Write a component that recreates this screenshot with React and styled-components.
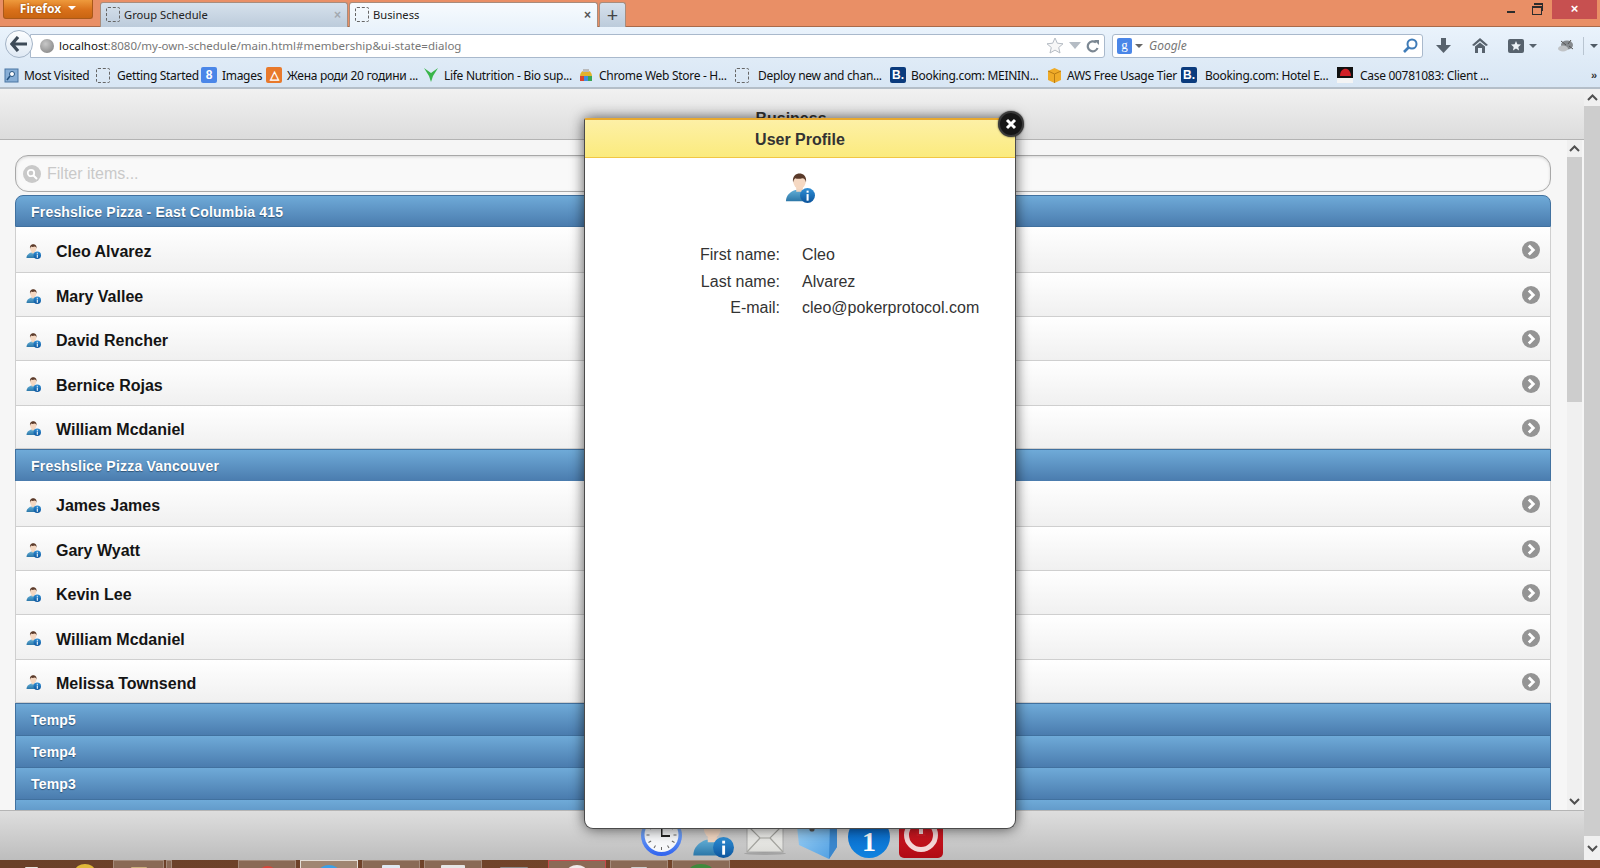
import React from "react"
import styled, { createGlobalStyle } from "styled-components"

const GlobalStyle = createGlobalStyle`
  html, body { margin: 0; padding: 0; height: 100%; overflow: hidden; }
  body { font-family: "Liberation Sans", Arial, sans-serif; }
`

const chromeFont = `"Noto Sans", "Liberation Sans", sans-serif`

const Screen = styled.div`
  position: relative;
  width: 1600px;
  height: 868px;
  overflow: hidden;
  display: flex;
  flex-direction: column;
  background: #f5f5f5;
`

/* ---------- browser chrome ---------- */
const TitleBar = styled.div`
  height: 27px;
  box-sizing: border-box;
  background: #e98f66;
  border-bottom: 1px solid #a86a4b;
  display: flex;
  align-items: flex-start;
  padding-left: 3px;
  flex: none;
`
const FirefoxButton = styled.div`
  width: 90px;
  height: 19px;
  box-sizing: border-box;
  background: linear-gradient(#ee9a3c, #d9701a 55%, #c96512);
  border: 1px solid #a9591a;
  border-top: none;
  border-radius: 0 0 3px 3px;
  color: #fff;
  font: bold 12px ${chromeFont};
  display: flex;
  align-items: center;
  justify-content: center;
  gap: 7px;
  padding-bottom: 2px;
  margin-right: 7px;
  text-shadow: 0 0 2px #7a3c05;
  &::after {
    content: "";
    border: 4px solid transparent;
    border-top: 4px solid #fff;
    border-bottom: none;
  }
`
const Tab = styled.div`
  width: ${p => p.$w}px;
  height: 25px;
  margin-top: 2px;
  box-sizing: border-box;
  margin-right: 1px;
  border: 1px solid #a88c7c;
  border-bottom: none;
  border-radius: 3px 3px 0 0;
  background: ${p => p.$active ? "linear-gradient(#f7fbfe, #eaf3fb)" : "linear-gradient(#d6e1ec, #bccbdb)"};
  display: flex;
  align-items: center;
  padding: 0 6px 1px 5px;
  font: 11.2px ${chromeFont};
  color: #222;
  span { flex: 1; margin-left: 4px; }
  b { font: bold 12px "Liberation Sans", sans-serif; color: ${p => p.$active ? "#555" : "#a3a9b0"}; }
`
const NewTab = styled(Tab)`
  justify-content: center;
  background: linear-gradient(#d6e1ec, #bccbdb);
  font-size: 20px;
  font-weight: 400;
  color: #444;
  padding: 0 0 2px;
`
const BlankPage = styled.i`
  display: block;
  flex: none;
  width: 14px;
  height: 15px;
  box-sizing: border-box;
  border: 1px dashed #666;
  border-radius: 2px;
`
const WindowControls = styled.div`
  margin-left: auto;
  display: flex;
  align-items: flex-start;
  height: 19px;
  padding-right: 3px;
`
const WinMin = styled.div`
  width: 8px;
  height: 2px;
  background: #2c2c2c;
  margin: 11px 17px 0 0;
`
const WinMax = styled.div`
  position: relative;
  width: 8px;
  height: 6px;
  border: 1px solid #2c2c2c;
  border-top-width: 2px;
  margin: 6px 10px 0 0;
  &::before {
    content: "";
    position: absolute;
    left: 1px;
    top: -5px;
    width: 8px;
    height: 6px;
    border: 1px solid #2c2c2c;
    border-top-width: 2px;
    border-left: none;
    border-bottom: none;
  }
`
const WinClose = styled.div`
  width: 45px;
  height: 19px;
  background: #c75050;
  color: #fff;
  font: bold 13px/18px "Liberation Sans", sans-serif;
  text-align: center;
`

const NavBar = styled.div`
  height: 33px;
  flex: none;
  background: linear-gradient(#eaf3fc, #dfebf7);
  display: flex;
  align-items: center;
  padding: 4px 0 0 5px;
  box-sizing: border-box;
  position: relative;
`
const BackButton = styled.div`
  width: 28px;
  height: 28px;
  flex: none;
  box-sizing: border-box;
  border: 1px solid #a3b3c6;
  border-radius: 50%;
  background: linear-gradient(#fdfeff, #dfe9f4);
  display: flex;
  align-items: center;
  justify-content: center;
  margin: -3px -3px 0 0;
  z-index: 1;
`
const UrlBox = styled.div`
  width: 1075px;
  height: 24px;
  box-sizing: border-box;
  border: 1px solid #a9b9cc;
  border-radius: 0 3px 3px 0;
  background: #fff;
  display: flex;
  align-items: center;
  padding: 0 3px 0 9px;
  font: 11.5px ${chromeFont};
  color: #777;
  em { font-style: normal; color: #111; }
  span { flex: 1; margin-left: 5px; }
`
const Globe = styled.i`
  width: 14px;
  height: 14px;
  border-radius: 50%;
  background: radial-gradient(circle at 40% 35%, #c8c8c8, #7b7b7b);
`
const SearchBox = styled.div`
  width: 311px;
  height: 24px;
  margin-left: 7px;
  box-sizing: border-box;
  border: 1px solid #a9b9cc;
  border-radius: 3px;
  background: #fff;
  display: flex;
  align-items: center;
  padding: 0 4px 0 4px;
  font: italic 12px ${chromeFont};
  color: #777;
  span { flex: 1; margin-left: 6px; }
`
const SmallArrow = styled.i`
  display: block;
  margin-left: ${p => p.$ml || 3}px;
  border-style: solid;
  border-color: ${p => p.$color || "#666"} transparent transparent;
  border-width: ${p => p.$big ? "7px 6px 0" : "4px 4px 0"};
`
const GoogleTile = styled.div`
  width: 15px;
  height: 16px;
  border-radius: 2px;
  background: #4a86e8;
  color: #fff;
  font: 13px/14px "Liberation Serif", serif;
  text-align: center;
  flex: none;
`
const NavTools = styled.div`
  display: flex;
  align-items: center;
  margin-left: 13px;
`
const NavTool = styled.div`
  margin-right: ${p => p.$mr}px;
  display: flex;
  align-items: center;
`

const BookmarkBar = styled.div`
  height: 29px;
  flex: none;
  box-sizing: border-box;
  background: linear-gradient(#dfebf7, #d8e6f4);
  border-bottom: 2px solid #b4bec8;
  display: flex;
  align-items: center;
  padding: 3px 0 0 4px;
  font: 12px ${chromeFont};
  color: #111;
`
const Bookmark = styled.div`
  display: flex;
  align-items: center;
  flex: none;
  width: ${p => p.$w}px;
  white-space: nowrap;
  overflow: visible;
  gap: ${p => p.$gap || 5}px;
  span { letter-spacing: -0.3px; }
`
const FavTile = styled.i`
  flex: none;
  width: 16px;
  height: 16px;
  border-radius: 2px;
  background: ${p => p.$bg};
  color: #fff;
  font: bold 12px/16px "Liberation Sans", sans-serif;
  text-align: center;
`
const More = styled.div`
  margin-left: auto;
  padding-right: 3px;
  font: bold 11px "Liberation Sans", sans-serif;
  color: #333;
`

/* ---------- page ---------- */
const Main = styled.div`
  flex: 1;
  min-height: 0;
  display: flex;
`
const Page = styled.div`
  flex: 1;
  display: flex;
  flex-direction: column;
  min-width: 0;
`
const PageHeader = styled.div`
  height: 51px;
  flex: none;
  box-sizing: border-box;
  border-bottom: 1px solid #b3b3b3;
  background: linear-gradient(#f1f1f1, #dcdcdc);
  text-align: center;
  font: bold 16px/60px "Liberation Sans", sans-serif;
  color: #333;
  padding-right: 2px;
`
const Content = styled.div`
  flex: 1;
  min-height: 0;
  display: flex;
  background: #f6f6f6;
`
const ListColumn = styled.div`
  flex: 1;
  padding: 15px 16px 0 15px;
  overflow: hidden;
  min-width: 0;
`
const FilterBox = styled.div`
  height: 37px;
  box-sizing: border-box;
  border: 1px solid #a8a8a8;
  border-radius: 13px;
  background: #f9f9f9;
  box-shadow: inset 0 1px 3px rgba(0,0,0,.15);
  display: flex;
  align-items: center;
  padding-left: 7px;
  gap: 6px;
  font: 16px "Liberation Sans", sans-serif;
  color: #c9c9c9;
  margin-bottom: 3px;
`
const FilterIcon = styled.div`
  width: 18px;
  height: 18px;
  border-radius: 50%;
  background: #c9c9c9;
  display: flex;
  align-items: center;
  justify-content: center;
`
const GroupHeader = styled.div`
  height: ${p => p.$h || 32}px;
  box-sizing: border-box;
  border: 1px solid #41719f;
  border-width: ${p => p.$first ? "1px 1px 1px 1px" : "1px 1px 0 1px"};
  border-radius: ${p => p.$first ? "8px 8px 0 0" : "0"};
  background: linear-gradient(#6faad8, #4a7cae);
  color: #fff;
  font: bold 14px/${p => p.$h || 32}px "Liberation Sans", sans-serif;
  letter-spacing: 0.2px;
  padding-left: 15px;
  text-shadow: 0 1px 1px #2f5578;
`
const Row = styled.div`
  height: ${p => p.$h}px;
  box-sizing: border-box;
  border: 1px solid #cfcfcf;
  border-width: 0 1px 1px 1px;
  background: linear-gradient(#ffffff, #f0f0f0);
  display: flex;
  align-items: center;
  padding: 5px 10px 0 10px;
  font: bold 16px "Liberation Sans", sans-serif;
  color: #141414;
  > svg { margin-top: -2px; }
`
const RowName = styled.div`
  flex: 1;
  margin-left: 15px;
`
const RowArrow = styled.div`
  margin-top: -4px;
`
const CloseDot = styled.div`
  position: absolute;
  top: -9px;
  right: -9px;
  width: 26px;
  height: 26px;
  box-sizing: border-box;
  border-radius: 50%;
  border: 2px solid #3a3a3a;
  background: #161616;
  box-shadow: 0 0 2px rgba(0,0,0,.7);
  display: flex;
  align-items: center;
  justify-content: center;
`
const ScrollTrack = styled.div`
  width: ${p => p.$w}px;
  flex: none;
  display: flex;
  flex-direction: column;
  background: ${p => p.$bg};
  margin-right: ${p => p.$mr || 0}px;
`
const ScrollButton = styled.div`
  height: ${p => p.$h}px;
  flex: none;
  display: flex;
  align-items: center;
  justify-content: center;
  background: #f0f0f0;
`
const ScrollThumb = styled.div`
  background: #cdcdcd;
  ${p => p.$h ? `height: ${p.$h}px; flex: none;` : "flex: 1;"}
`
const ScrollGap = styled.div`
  flex: 1;
`

const Footer = styled.div`
  height: 50px;
  flex: none;
  box-sizing: border-box;
  border-top: 1px solid #b5b5b5;
  background: linear-gradient(#dedede, #bdbdbd);
  overflow: hidden;
  display: flex;
  justify-content: center;
  align-items: flex-end;
  padding-bottom: 1px;
`
const DockIcon = styled.div`
  width: ${p => p.$w}px;
  margin-right: ${p => p.$mr}px;
  margin-bottom: ${p => p.$mb || 0}px;
  flex: none;
  line-height: 0;
`

const Taskbar = styled.div`
  height: 8px;
  flex: none;
  background: linear-gradient(90deg, #6a4029, #74452a 50%, #83462a);
  display: flex;
  align-items: flex-start;
`
const TaskItem = styled.div`
  width: ${p => p.$w}px;
  margin-left: ${p => p.$ml}px;
  height: 8px;
  box-sizing: border-box;
  border: 1px solid ${p => p.$edge || "#a58b7b"};
  border-bottom: none;
  background: ${p => p.$bg || "#8a6a56"};
  display: flex;
  justify-content: center;
  overflow: hidden;
  flex: none;
`
const TaskGlyph = styled.i`
  display: block;
  flex: none;
  width: ${p => p.$w}px;
  height: 14px;
  margin-left: ${p => p.$ml || 0}px;
  margin-top: ${p => p.$top}px;
  background: ${p => p.$color};
  border-radius: ${p => p.$round ? "50%" : "1px"};
`
const TaskEdge = styled.div`
  display: flex;
  height: 8px;
  overflow: hidden;
  flex: none;
`

/* ---------- dialog ---------- */
const Dialog = styled.div`
  position: absolute;
  left: 584px;
  top: 118px;
  width: 432px;
  height: 711px;
  box-sizing: border-box;
  background: #fff;
  border: 1px solid #4a4a4a;
  border-top: 2px solid #e8a92e;
  border-radius: 2px 2px 9px 9px;
  box-shadow: 0 0 14px rgba(0,0,0,.65);
  z-index: 5;
`
const DialogTitle = styled.div`
  height: 38px;
  box-sizing: border-box;
  background: linear-gradient(#fdf0a6, #fbeb7e);
  border-bottom: 1px solid #f1c644;
  font: bold 16px/40px "Liberation Sans", sans-serif;
  color: #333;
  text-align: center;
`
const DialogBody = styled.div`
  display: flex;
  flex-direction: column;
  align-items: center;
  padding-top: 15px;
`
const Fields = styled.div`
  margin-top: 39px;
  width: 100%;
  display: grid;
  grid-template-columns: 195px 1fr;
  column-gap: 22px;
  font: 16px/26.5px "Liberation Sans", sans-serif;
  color: #333;
`
const FieldLabel = styled.div`
  text-align: right;
`

const UserInfoIcon = ({ size = 16 }) => (
  <svg width={size} height={size} viewBox="0 0 32 32" style={{ display: "block", flex: "none" }}>
    <defs>
      <linearGradient id="uiBody" x1="0" y1="0" x2="0" y2="1">
        <stop offset="0" stopColor="#62aed6" />
        <stop offset="1" stopColor="#2c77a8" />
      </linearGradient>
      <linearGradient id="uiBadge" x1="0" y1="0" x2="0" y2="1">
        <stop offset="0" stopColor="#2f8fd6" />
        <stop offset="1" stopColor="#0c549c" />
      </linearGradient>
    </defs>
    <path d="M1 30c0-6 4-10 10-12l6 0c4 1 8 4 9 12z" fill="url(#uiBody)" />
    <rect x="12" y="14" width="7" height="6" fill="#f0d4bf" />
    <ellipse cx="15.5" cy="9" rx="6.6" ry="8" fill="#f5d8c2" />
    <path d="M8.6 10C7.5 3 12 .5 15.5.5S23.5 3 22.4 10C21.8 7 20.5 5.5 18.5 5.5c-3 1-6 .8-7.5 0-1.3 1-2 2.500-2.400 4.500z" fill="#5a3a2a" />
    <circle cx="24" cy="24" r="8" fill="url(#uiBadge)" />
    <rect x="23" y="22.500" width="2.200" height="7" fill="#fff" />
    <rect x="23" y="18.800" width="2.200" height="2.200" fill="#fff" />
  </svg>
)

const Chevron = () => (
  <svg width="18" height="18" viewBox="0 0 18 18" style={{ display: "block", flex: "none" }}>
    <circle cx="9" cy="9" r="9" fill="#949494" />
    <path d="M6.800 4.500 L11.300 9 L6.800 13.500" fill="none" stroke="#fff" strokeWidth="2.800" />
  </svg>
)

const ScrollArrow = ({ down }) => (
  <svg width="11" height="7" viewBox="0 0 11 7" style={{ transform: down ? "rotate(180deg)" : "none" }}>
    <path d="M1 6 L5.500 1.500 L10 6" fill="none" stroke="#505050" strokeWidth="2" />
  </svg>
)

const ClockIcon = () => (
  <svg width="41" height="41" viewBox="0 0 41 41">
    <defs>
      <linearGradient id="clockRim" x1="0" y1="0" x2="0" y2="1">
        <stop offset="0" stopColor="#9fd0ff" />
        <stop offset="1" stopColor="#2f62ee" />
      </linearGradient>
    </defs>
    <circle cx="20.500" cy="20.500" r="20.500" fill="url(#clockRim)" />
    <circle cx="20.500" cy="20" r="17" fill="#f7f8fa" />
    {[0, 30, 60, 90, 120, 150, 180, 210, 240, 270, 300, 330].map(deg => (
      <rect key={deg} x="20" y="5" width="1" height="3" fill="#666" transform={`rotate(${deg} 20.500 20)`} />
    ))}
    <rect x="20" y="9" width="1.500" height="12" fill="#222" />
    <rect x="20" y="20" width="9" height="2" fill="#222" />
  </svg>
)

const MailIcon = () => (
  <svg width="42" height="40" viewBox="0 0 42 40">
    <defs>
      <linearGradient id="mailFace" x1="0" y1="0" x2="0" y2="1">
        <stop offset="0" stopColor="#fafaf8" />
        <stop offset="1" stopColor="#dcdcd8" />
      </linearGradient>
    </defs>
    <path d="M26 4 L38 4 L38 10 L31 10 Z" fill="#e6cf62" />
    <rect x="3" y="6" width="36" height="30" fill="url(#mailFace)" stroke="#aaa" />
    <path d="M3 9 L16 22 L26 22 L39 9 M3 36 L16 22 M39 36 L26 22" fill="none" stroke="#a5a5a0" strokeWidth="1.200" />
    <ellipse cx="21" cy="37.500" rx="21" ry="1.500" fill="#8f8f8f" opacity=".6" />
  </svg>
)

const BoxIcon = () => (
  <svg width="41" height="44" viewBox="0 0 41 44">
    <defs>
      <linearGradient id="boxFace" x1="0" y1="0" x2="1" y2="1">
        <stop offset="0" stopColor="#a8d8f8" />
        <stop offset="1" stopColor="#4a9be0" />
      </linearGradient>
    </defs>
    <path d="M0 2 H41 V32 L33 44 L3 30 Z" fill="url(#boxFace)" />
    <path d="M33 44 L41 32 V2 L34 8 Z" fill="#3a86cc" />
    <circle cx="16" cy="14" r="2.600" fill="#555" />
  </svg>
)

const InfoDiscIcon = () => (
  <svg width="42" height="42" viewBox="0 0 42 42">
    <defs>
      <linearGradient id="infoDisc" x1="0" y1="0" x2="0" y2="1">
        <stop offset="0" stopColor="#0a62c0" />
        <stop offset="1" stopColor="#0f83e0" />
      </linearGradient>
    </defs>
    <circle cx="21" cy="21" r="21" fill="url(#infoDisc)" />
    <text x="21" y="35" textAnchor="middle" fill="#fff" fontFamily="Liberation Serif, serif" fontWeight="700" fontSize="28">1</text>
  </svg>
)

const PowerIcon = () => (
  <svg width="44" height="44" viewBox="0 0 44 44">
    <defs>
      <linearGradient id="powerFace" x1="0" y1="0" x2="0" y2="1">
        <stop offset="0" stopColor="#e0202a" />
        <stop offset="1" stopColor="#b00a14" />
      </linearGradient>
    </defs>
    <rect width="44" height="44" rx="5" fill="url(#powerFace)" />
    <circle cx="22" cy="21" r="14.500" fill="none" stroke="#f4d6d6" strokeWidth="5" />
    <rect x="17.500" y="0" width="9" height="22" fill="#d01a24" />
    <rect x="20" y="0" width="4" height="20" fill="#f4d6d6" />
  </svg>
)

const groupOne = [
  ["Cleo Alvarez", 46], ["Mary Vallee", 44], ["David Rencher", 44], ["Bernice Rojas", 45], ["William Mcdaniel", 43],
]
const groupTwo = [
  ["James James", 46], ["Gary Wyatt", 44], ["Kevin Lee", 44], ["William Mcdaniel", 45], ["Melissa Townsend", 43],
]

const PersonRows = ({ rows }) => rows.map(([name, h]) => (
  <Row key={name} $h={h}>
    <UserInfoIcon size={15} />
    <RowName>{name}</RowName>
    <RowArrow><Chevron /></RowArrow>
  </Row>
))

export default function App() {
  return (
    <Screen>
      <GlobalStyle />
      <TitleBar>
        <FirefoxButton>Firefox</FirefoxButton>
        <Tab $w={248}><BlankPage /><span>Group Schedule</span><b>×</b></Tab>
        <Tab $w={249} $active><BlankPage /><span>Business</span><b>×</b></Tab>
        <NewTab $w={27}>+</NewTab>
        <WindowControls>
          <WinMin />
          <WinMax />
          <WinClose>×</WinClose>
        </WindowControls>
      </TitleBar>

      <NavBar>
        <BackButton>
          <svg width="18" height="16" viewBox="0 0 18 16">
            <path d="M8 1 L2 8 L8 15 M2.500 8 H17" fill="none" stroke="#3d4a57" strokeWidth="3.200" />
          </svg>
        </BackButton>
        <UrlBox>
          <Globe />
          <span><em>localhost</em>:8080/my-own-schedule/main.html#membership&amp;ui-state=dialog</span>
          <svg width="18" height="17" viewBox="0 0 18 17">
            <path d="M9 1 L11.300 6.200 L17 6.800 L12.700 10.500 L14 16 L9 13.100 L4 16 L5.300 10.500 L1 6.800 L6.700 6.200 Z" fill="#f7f7f7" stroke="#b5bcc4" />
          </svg>
          <SmallArrow $ml={5} $big $color="#b5bcc4" />
          <svg width="16" height="14" viewBox="0 0 16 14" style={{ marginLeft: 4 }}>
            <path d="M12.500 9 A5 5 0 1 1 11 3.500" fill="none" stroke="#7b8792" strokeWidth="2.200" />
            <path d="M9 1 L14 1 L14 6 Z" fill="#7b8792" />
          </svg>
        </UrlBox>
        <SearchBox>
          <GoogleTile>g</GoogleTile>
          <SmallArrow />
          <span>Google</span>
          <svg width="16" height="16" viewBox="0 0 16 16">
            <circle cx="10" cy="6" r="4.500" fill="#fff" stroke="#3f7cb8" strokeWidth="2" />
            <path d="M6.500 9.500 L2 14" stroke="#3f7cb8" strokeWidth="2.600" />
          </svg>
        </SearchBox>
        <NavTools>
          <NavTool $mr={21}>
            <svg width="15" height="15" viewBox="0 0 15 15"><path d="M5 0 H10 V7 H15 L7.500 15 L0 7 H5 Z" fill="#57626d" /></svg>
          </NavTool>
          <NavTool $mr={20}>
            <svg width="16" height="15" viewBox="0 0 16 15"><path d="M8 0 L16 7 L14 8 L8 3 L2 8 L0 7 Z M3 8.500 L8 4.500 L13 8.500 V15 H10 V10 H6 V15 H3 Z" fill="#57626d" /></svg>
          </NavTool>
          <NavTool $mr={20}>
            <svg width="16" height="14" viewBox="0 0 16 14">
              <rect width="16" height="14" rx="2" fill="#57626d" />
              <path d="M8 2 L9.400 5.300 L13 5.600 L10.300 8 L11.100 11.500 L8 9.600 L4.900 11.500 L5.700 8 L3 5.600 L6.600 5.300 Z" fill="#eef3f8" />
            </svg>
            <SmallArrow $ml={5} $color="#57626d" />
          </NavTool>
          <NavTool $mr={8}>
            <svg width="18" height="14" viewBox="0 0 18 14">
              <ellipse cx="10" cy="6" rx="6" ry="4.500" fill="#85898d" />
              <ellipse cx="6" cy="9.500" rx="5" ry="3" fill="#c0c3c6" />
              <path d="M4 2 L9 6 M14 1 L11 5 M16 10 L12 7" stroke="#555" strokeWidth="1" />
            </svg>
          </NavTool>
          <svg width="1" height="18"><rect width="1" height="18" fill="#b9c5d1" /></svg>
          <SmallArrow $ml={6} $color="#4f5a65" />
        </NavTools>
      </NavBar>

      <BookmarkBar>
        <Bookmark $w={92}>
          <svg width="15" height="15" viewBox="0 0 15 15" style={{ flex: "none" }}>
            <rect x="1" y="1" width="13" height="13" fill="#87aed6" stroke="#4b76a3" />
            <circle cx="8" cy="6" r="2.500" fill="#fff" stroke="#24527f" />
            <path d="M6 8 L3 12" stroke="#24527f" strokeWidth="1.500" />
          </svg>
          <span>Most Visited</span>
        </Bookmark>
        <Bookmark $w={105} $gap={7}><BlankPage /><span>Getting Started</span></Bookmark>
        <Bookmark $w={65}><FavTile $bg="#4a86e8">8</FavTile><span>Images</span></Bookmark>
        <Bookmark $w={157}><FavTile $bg="#e8792b">△</FavTile><span>Жена роди 20 години ...</span></Bookmark>
        <Bookmark $w={156}>
          <svg width="16" height="16" viewBox="0 0 16 16" style={{ flex: "none" }}>
            <path d="M1 1 L8 6 L15 1 L10 9 L8 15 L6 9 Z" fill="#39b54a" />
          </svg>
          <span>Life Nutrition - Bio sup...</span>
        </Bookmark>
        <Bookmark $w={156} $gap={6}>
          <svg width="14" height="16" viewBox="0 0 14 16" style={{ flex: "none" }}>
            <path d="M1 9 A6 6 0 0 1 13 9 Z" fill="#e2b32b" />
            <rect x="1" y="9" width="4" height="5" fill="#d8432f" />
            <rect x="5" y="9" width="4" height="5" fill="#3f8ee0" />
            <rect x="9" y="9" width="4" height="5" fill="#3aa655" />
            <rect x="4" y="2" width="6" height="3" fill="#bbb" />
          </svg>
          <span>Chrome Web Store - H...</span>
        </Bookmark>
        <Bookmark $w={155} $gap={9}><BlankPage /><span>Deploy new and chan...</span></Bookmark>
        <Bookmark $w={157}><FavTile $bg="#0b3b7d">B.</FavTile><span>Booking.com: MEININ...</span></Bookmark>
        <Bookmark $w={134}>
          <svg width="15" height="15" viewBox="0 0 15 15" style={{ flex: "none" }}>
            <path d="M1 3 L7.500 0 L14 3 V12 L7.500 15 L1 12 Z" fill="#efab28" />
            <path d="M7.500 6 V15 M1 3 L7.500 6 L14 3" stroke="#b97c13" fill="none" />
          </svg>
          <span>AWS Free Usage Tier</span>
        </Bookmark>
        <Bookmark $w={156} $gap={8}><FavTile $bg="#0b3b7d">B.</FavTile><span>Booking.com: Hotel E...</span></Bookmark>
        <Bookmark $w={200} $gap={7}>
          <svg width="16" height="16" viewBox="0 0 16 16" style={{ flex: "none" }}>
            <rect width="16" height="11" fill="#111" />
            <path d="M3 9 C3 3 7 1 10 2 C13 3 14 7 14 9 Z" fill="#d21f26" />
            <rect y="11" width="16" height="5" fill="#f4f4f4" />
          </svg>
          <span>Case 00781083: Client ...</span>
        </Bookmark>
        <More>»</More>
      </BookmarkBar>

      <Main>
        <Page>
          <PageHeader>Business</PageHeader>
          <Content>
            <ListColumn>
              <FilterBox>
                <FilterIcon>
                  <svg width="12" height="12" viewBox="0 0 12 12">
                    <circle cx="5" cy="5" r="3.200" fill="none" stroke="#fff" strokeWidth="1.800" />
                    <path d="M7.500 7.500 L11 11" stroke="#fff" strokeWidth="2" />
                  </svg>
                </FilterIcon>
                Filter items...
              </FilterBox>
              <GroupHeader $first>Freshslice Pizza - East Columbia 415</GroupHeader>
              <PersonRows rows={groupOne} />
              <GroupHeader>Freshslice Pizza Vancouver</GroupHeader>
              <PersonRows rows={groupTwo} />
              <GroupHeader>Temp5</GroupHeader>
              <GroupHeader>Temp4</GroupHeader>
              <GroupHeader>Temp3</GroupHeader>
              <GroupHeader />
            </ListColumn>
            <ScrollTrack $w={15} $bg="#f0f0f0" $mr={2}>
              <ScrollButton $h={17}><ScrollArrow /></ScrollButton>
              <ScrollThumb $h={245} />
              <ScrollGap />
              <ScrollButton $h={17}><ScrollArrow down /></ScrollButton>
            </ScrollTrack>
          </Content>
          <Footer>
            <DockIcon $w={41} $mr={10} $mb={3}><ClockIcon /></DockIcon>
            <DockIcon $w={42} $mr={10} $mb={1}><UserInfoIcon size={42} /></DockIcon>
            <DockIcon $w={42} $mr={10} $mb={3}><MailIcon /></DockIcon>
            <DockIcon $w={41} $mr={11}><BoxIcon /></DockIcon>
            <DockIcon $w={42} $mr={9} $mb={1}><InfoDiscIcon /></DockIcon>
            <DockIcon $w={44} $mr={0} $mb={1}><PowerIcon /></DockIcon>
          </Footer>
        </Page>
        <ScrollTrack $w={16} $bg="#cdcdcd">
          <ScrollButton $h={17}><ScrollArrow /></ScrollButton>
          <ScrollThumb />
          <ScrollButton $h={24}><ScrollArrow down /></ScrollButton>
        </ScrollTrack>
      </Main>

      <Taskbar>
        <TaskEdge><TaskGlyph $ml={25} $w={13} $top={7} $color="#e8e4e0" /></TaskEdge>
        <TaskEdge><TaskGlyph $ml={37} $w={20} $top={4} $color="#e0b83a" $round /></TaskEdge>
        <TaskItem $w={51} $ml={18}><TaskGlyph $w={16} $top={6} $color="#cbb07c" /></TaskItem>
        <TaskItem $w={6} $ml={2} />
        <TaskItem $w={58} $ml={66}><TaskGlyph $w={17} $top={5} $color="#d9453a" $round /></TaskItem>
        <TaskItem $w={58} $ml={4} $bg="#a08672" $edge="#e4ddd6"><TaskGlyph $w={20} $top={4} $color="#3aa0e8" $round /></TaskItem>
        <TaskItem $w={58} $ml={4}><TaskGlyph $w={18} $top={4} $color="#dfe8f2" /></TaskItem>
        <TaskItem $w={58} $ml={4}><TaskGlyph $w={24} $top={4} $color="#e6e6e6" /></TaskItem>
        <TaskEdge><TaskGlyph $ml={18} $w={28} $top={7} $color="#8c8c8c" /></TaskEdge>
        <TaskItem $w={58} $ml={20} $edge="#c64a4a"><TaskGlyph $w={20} $top={4} $color="#f0eaea" $round /></TaskItem>
        <TaskItem $w={58} $ml={4}><TaskGlyph $w={16} $top={6} $color="#cfcfcf" /></TaskItem>
        <TaskItem $w={58} $ml={4}><TaskGlyph $w={24} $top={3} $color="#3f8a3c" $round /></TaskItem>
      </Taskbar>

      <Dialog>
        <CloseDot>
          <svg width="12" height="12" viewBox="0 0 12 12">
            <path d="M2 2 L10 10 M10 2 L2 10" stroke="#fff" strokeWidth="3" />
          </svg>
        </CloseDot>
        <DialogTitle>User Profile</DialogTitle>
        <DialogBody>
          <UserInfoIcon size={30} />
          <Fields>
            <FieldLabel>First name:</FieldLabel><div>Cleo</div>
            <FieldLabel>Last name:</FieldLabel><div>Alvarez</div>
            <FieldLabel>E-mail:</FieldLabel><div>cleo@pokerprotocol.com</div>
          </Fields>
        </DialogBody>
      </Dialog>
    </Screen>
  )
}
